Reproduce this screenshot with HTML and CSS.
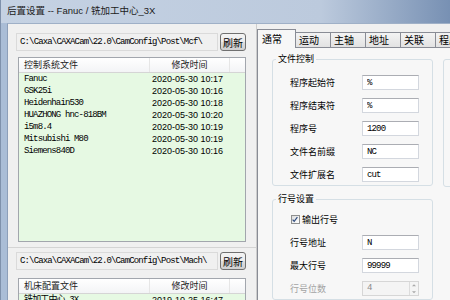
FILE: index.html
```html
<!DOCTYPE html>
<html lang="zh-CN">
<head>
  <meta charset="UTF-8">
  <meta name="viewport" content="width=device-width, initial-scale=1.0">
  <title>后置设置</title>
  <link rel="stylesheet" href="styles.css">
</head>
<body>
  <div class="window">
    <div class="titlebar">后置设置 -- Fanuc / 铣加工中心_3X</div>
    <div class="frame">
      <div class="client">

        <div class="left-col">
          <div class="file-panel">
            <div class="path-row">
              <div class="path mono">C:\Caxa\CAXACam\22.0\CamConfig\Post\Mcf\</div>
              <button class="btn">刷新</button>
            </div>
            <div class="list list-tall">
              <div class="list-head">
                <span class="head-name">控制系统文件</span>
                <span class="head-time">修改时间</span>
                <span></span>
              </div>
              <div class="row"><span class="name mono">Fanuc</span><span class="time">2020-05-30 10:17</span></div>
              <div class="row"><span class="name mono">GSK25i</span><span class="time">2020-05-30 10:16</span></div>
              <div class="row"><span class="name mono">Heidenhain530</span><span class="time">2020-05-30 10:18</span></div>
              <div class="row"><span class="name mono">HUAZHONG hnc-818BM</span><span class="time">2020-05-30 10:20</span></div>
              <div class="row"><span class="name mono">i5m8.4</span><span class="time">2020-05-30 10:19</span></div>
              <div class="row"><span class="name mono">Mitsubishi M80</span><span class="time">2020-05-30 10:19</span></div>
              <div class="row"><span class="name mono">Siemens840D</span><span class="time">2020-05-30 10:16</span></div>
            </div>
          </div>

          <div class="file-panel">
            <div class="path-row">
              <div class="path mono">C:\Caxa\CAXACam\22.0\CamConfig\Post\Mach\</div>
              <button class="btn">刷新</button>
            </div>
            <div class="list">
              <div class="list-head">
                <span class="head-name">机床配置文件</span>
                <span class="head-time">修改时间</span>
                <span></span>
              </div>
              <div class="row"><span class="name mono">铣加工中心_3X</span><span class="time">2019-10-25 16:47</span></div>
            </div>
          </div>
        </div>

        <div class="right-col">
          <div class="tabs">
            <span class="tab active">通常</span>
            <span class="tab">运动</span>
            <span class="tab">主轴</span>
            <span class="tab">地址</span>
            <span class="tab">关联</span>
            <span class="tab">程序</span>
          </div>
          <div class="tab-page">
            <div class="groups">
              <fieldset class="group">
                <legend>文件控制</legend>
                <div class="field"><label>程序起始符</label><input type="text" value="%" readonly></div>
                <div class="field"><label>程序结束符</label><input type="text" value="%" readonly></div>
                <div class="field"><label>程序号</label><input type="text" value="1200" readonly></div>
                <div class="field"><label>文件名前缀</label><input type="text" value="NC" readonly></div>
                <div class="field"><label>文件扩展名</label><input type="text" value="cut" readonly></div>
              </fieldset>
              <fieldset class="group">
                <legend>行号设置</legend>
                <div class="check-row">
                  <span class="checkbox">
                    <svg width="9" height="9" viewBox="0 0 9 9"><path d="M1.8 4.6 L3.6 6.6 L7.2 1.9" fill="none" stroke="#2c4a7e" stroke-width="1.3"/></svg>
                  </span>
                  输出行号
                </div>
                <div class="field"><label>行号地址</label><input type="text" value="N" readonly></div>
                <div class="field"><label>最大行号</label><input type="text" value="99999" readonly></div>
                <div class="field disabled">
                  <label>行号位数</label>
                  <div class="spin">
                    <span class="spin-value mono">4</span>
                    <span class="spin-arrows">
                      <svg width="8" height="6" viewBox="0 0 8 6"><path d="M2 4 L4 2 L6 4 Z" fill="#a8a8a8"/></svg>
                      <svg width="8" height="6" viewBox="0 0 8 6"><path d="M2 2 L4 4 L6 2 Z" fill="#a8a8a8"/></svg>
                    </span>
                  </div>
                </div>
              </fieldset>
            </div>
            <div class="group-side"></div>
          </div>
        </div>

      </div>
    </div>
  </div>
</body>
</html>
```

FILE: styles.css
```css
* {
  box-sizing: border-box;
}

body {
  margin: 0;
  width: 450px;
  height: 300px;
  overflow: hidden;
  background: #f0f0f0;
  font-family: "Noto Sans CJK SC", sans-serif;
  font-size: 9px;
  color: #000;
}

.window {
  width: 640px;
}

.titlebar {
  height: 23px;
  padding-left: 6px;
  line-height: 22px;
  font-family: "Liberation Sans", "Noto Sans CJK SC", sans-serif;
  font-size: 9.5px;
  color: #1b1b1b;
  border-left: 1px solid #7f91ab;
  background: linear-gradient(to right, #c5d2e3 0, #bccadd 320px, #7790b3 450px, #6a83a8 640px);
}

.frame {
  border-left: 1px solid #7f91ab;
  padding-left: 6px;
  background: #aabdd6;
}

.client {
  display: flex;
  height: 277px;
  background: #f0f0f0;
  border-top: 1px solid #9fb0c7;
  border-left: 1px solid #8d9fb9;
}

/* left side: two file lists */
.left-col {
  flex: none;
  width: 249px;
  border-right: 1px solid #cdcdcd;
}

.file-panel {
  padding: 9px 10px 5px 8px;
  border-bottom: 1px solid #d4d4d4;
}

.file-panel + .file-panel {
  padding-top: 4px;
  border-bottom: none;
}

.mono {
  font-family: "Liberation Mono", "Noto Sans CJK SC", monospace;
  letter-spacing: -0.85px;
}

.path-row {
  display: flex;
  gap: 2px;
  height: 18px;
}

.path {
  flex: 1;
  padding-left: 3px;
  line-height: 16px;
  border: 1px solid #dadada;
  white-space: nowrap;
}

.btn {
  width: 26px;
  height: 18px;
  padding: 0;
  border: 1px solid #707070;
  border-radius: 3px;
  background: linear-gradient(#f4f4f4 0, #ececec 50%, #dedede 50%, #d0d0d0 100%);
  font-family: "Noto Sans CJK SC", sans-serif;
  font-size: 10px;
  color: #000;
}

.list {
  margin: 6px 0 0 2px;
  height: 40px;
  border: 1px solid #a2a6ad;
  background: #e6f9e3;
}

.file-panel + .file-panel .list {
  margin-top: 8px;
}

.list-tall {
  height: 185px;
}

.list-head {
  display: grid;
  grid-template-columns: 131px 80px 1fr;
  height: 15px;
  line-height: 14px;
  color: #222;
  background: linear-gradient(#ffffff, #f3f4f6);
  border-bottom: 1px solid #d5d5d5;
}

.list-head span {
  border-right: 1px solid #e6e6e6;
}

.list-head span:last-child {
  border-right: none;
}

.head-name {
  padding-left: 5px;
}

.head-time {
  text-align: center;
}

.row {
  display: grid;
  grid-template-columns: 131px 80px;
  height: 12px;
  line-height: 12px;
  white-space: nowrap;
}

.name {
  padding-left: 5px;
}

.time {
  padding-left: 2px;
  font-family: "Liberation Sans", sans-serif;
}

/* right side: tab control */
.right-col {
  flex: 1;
  display: flex;
  flex-direction: column;
}

.tabs {
  display: flex;
  align-items: flex-end;
  height: 26px;
}

.tab {
  width: 36px;
  height: 15px;
  margin-left: -1px;
  padding-left: 3px;
  font-size: 10px;
  line-height: 14px;
  border: 1px solid #898c95;
  border-bottom: none;
  background: linear-gradient(#f3f3f3, #e2e2e2);
  white-space: nowrap;
}

.tab.active {
  position: relative;
  z-index: 1;
  width: 39px;
  height: 19px;
  margin: 0 0 -1px 0;
  padding-left: 4px;
  line-height: 18px;
  background: #f7f7f7;
}

.tab-page {
  flex: 1;
  display: flex;
  align-items: flex-start;
  padding: 5px 0 0 14px;
  border-top: 1px solid #898c95;
  border-left: 1px solid #898c95;
  background: #f7f7f7;
}

.groups {
  width: 161px;
}

.group {
  margin: 0;
  min-width: 0;
  padding: 10px 0 3px 3px;
  border: 1px solid #d5dfe5;
  border-radius: 3px;
}

.group + .group {
  margin-top: 7px;
  padding-top: 7px;
}

.group legend {
  padding: 0 2px;
  line-height: 12px;
}

.group-side {
  width: 120px;
  height: 128px;
  margin: 6px 0 0 10px;
  border: 1px solid #d5dfe5;
  border-radius: 3px;
}

.field {
  display: flex;
  align-items: center;
  height: 15px;
  padding-left: 14px;
}

.field + .field {
  margin-top: 8px;
}

.check-row + .field {
  margin-top: 9px;
}

.field label {
  width: 72px;
}

.field input {
  width: 57px;
  height: 15px;
  padding: 0 4px;
  font-family: "Liberation Mono", monospace;
  font-size: 9px;
  letter-spacing: -0.85px;
  color: #000;
  background: #fff;
  border: 1px solid #d3d7de;
  border-top-color: #abadb3;
  outline: none;
}

.check-row {
  display: flex;
  align-items: center;
  gap: 2px;
  height: 14px;
  padding-left: 15px;
}

.checkbox {
  display: flex;
  width: 9px;
  height: 9px;
  border: 1px solid #8e8f8f;
  background: linear-gradient(135deg, #dcdcdc, #ffffff);
}

.checkbox svg {
  margin: -1px 0 0 -1px;
}

.field.disabled label {
  color: #a3a3a3;
}

.spin {
  display: flex;
  width: 57px;
  height: 15px;
  border: 1px solid #d6d6d6;
  background: #f4f4f4;
}

.spin-value {
  flex: 1;
  padding-left: 4px;
  line-height: 13px;
  color: #8a8a8a;
}

.spin-arrows {
  display: flex;
  flex-direction: column;
  width: 9px;
  border-left: 1px solid #dcdcdc;
}

.spin-arrows svg {
  flex: 1;
}
```
